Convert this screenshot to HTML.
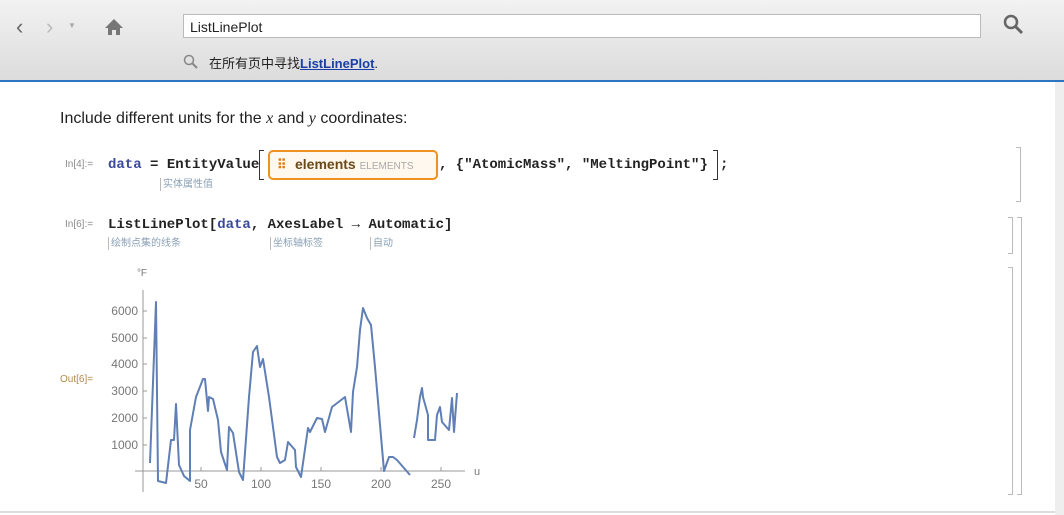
<!DOCTYPE html>
<html><head><meta charset="utf-8"><style>
body{margin:0;width:1064px;height:515px;overflow:hidden;background:#fff;font-family:"Liberation Sans","Noto Sans CJK SC",sans-serif;position:relative}
.tb{position:absolute;left:0;top:0;width:1064px;height:80px;background:linear-gradient(#f2f2f2,#dcdcdc);border-bottom:2px solid #2d75c0}
.abs{position:absolute}
.mono{font-family:"Liberation Mono","DejaVu Sans Mono",monospace;font-weight:bold;font-size:14px;color:#222}
.lbl{font-size:10px;color:#8a8a8a}
.hint{font-size:10px;color:#8aa0b5;border-left:1px solid #bbb;padding-left:2px;height:13px;line-height:13px}
.br{position:absolute;border:1px solid #bbb;border-left:none;width:4px}
</style></head><body>
<div class="tb"></div>
<div class="abs" style="left:16px;top:14px;font-size:22px;color:#666">&#x2039;</div>
<div class="abs" style="left:46px;top:14px;font-size:22px;color:#bbb">&#x203A;</div>
<div class="abs" style="left:68px;top:21px;font-size:8px;color:#aaa">▼</div>
<svg class="abs" style="left:104px;top:18px" width="20" height="18"><path d="M10 1 L1 10 H4 V17 H8 V12 H12 V17 H16 V10 H19 Z" fill="#777"/></svg>
<div class="abs" style="left:183px;top:14px;width:798px;height:24px;background:#fff;border:1px solid #bbb;font-size:14px;line-height:24px;padding-left:6px;box-sizing:border-box;color:#222">ListLinePlot</div>
<svg class="abs" style="left:1003px;top:14px" width="22" height="22"><circle cx="8" cy="8" r="6" stroke="#666" stroke-width="2.5" fill="none"/><path d="M12 12 L19 19" stroke="#666" stroke-width="3"/></svg>
<svg class="abs" style="left:183px;top:54px" width="16" height="16"><circle cx="6" cy="6" r="4.5" stroke="#888" stroke-width="1.5" fill="none"/><path d="M9 9 L14 14" stroke="#888" stroke-width="2"/></svg>
<div class="abs" style="left:209px;top:53px;font-size:13px;color:#222">在所有页中寻找<b style="color:#1a3ea8;text-decoration:underline">ListLinePlot</b>.</div>
<div class="abs" style="left:1055px;top:82px;width:9px;height:433px;background:#eee"></div>
<div class="abs" style="left:0;top:511px;width:1055px;height:2px;background:#ddd"></div>

<div class="abs" style="left:60px;top:110px;font-size:16px;color:#222">Include different units for the <i style="font-family:'Liberation Serif',serif">x</i> and <i style="font-family:'Liberation Serif',serif">y</i> coordinates:</div>

<div class="abs lbl" style="left:65px;top:159px">In[4]:=</div>
<div class="abs mono" style="left:108px;top:157px"><span style="color:#3a4a9a">data</span> = EntityValue</div>
<div class="abs" style="left:259px;top:150px;width:4px;height:28px;border:1px solid #333;border-right:none"></div>
<div class="abs" style="left:268px;top:150px;width:166px;height:26px;border:2px solid #f0901e;border-radius:5px;background:#fff8ee"></div>
<div class="abs" style="left:277px;top:157px;font-size:13px;color:#e07810;font-weight:bold">⠿</div>
<div class="abs" style="left:295px;top:156px;font-size:14px;font-weight:bold;color:#6a4a1a">elements <span style="font-size:10px;font-weight:normal;color:#aaa">ELEMENTS</span></div>
<div class="abs mono" style="left:439px;top:157px">, {"AtomicMass", "MeltingPoint"}</div>
<div class="abs" style="left:713px;top:150px;width:4px;height:28px;border:1px solid #333;border-left:none"></div>
<div class="abs mono" style="left:720px;top:157px">;</div>
<div class="abs hint" style="left:160px;top:178px">实体属性值</div>

<div class="abs lbl" style="left:65px;top:219px">In[6]:=</div>
<div class="abs mono" style="left:108px;top:217px">ListLinePlot[<span style="color:#3a4a9a">data</span>, AxesLabel → Automatic]</div>
<div class="abs hint" style="left:108px;top:237px">绘制点集的线条</div>
<div class="abs hint" style="left:270px;top:237px">坐标轴标签</div>
<div class="abs hint" style="left:370px;top:237px">自动</div>

<div class="br" style="left:1016px;top:147px;height:53px"></div>
<div class="br" style="left:1008px;top:217px;height:35px"></div>
<div class="br" style="left:1017px;top:217px;height:276px"></div>
<div class="br" style="left:1008px;top:267px;height:226px"></div>

<div class="abs lbl" style="left:60px;top:374px;color:#b08a50">Out[6]=</div>
<svg class="abs" style="left:0;top:0" width="1064" height="515">
<g font-family="Liberation Sans,sans-serif" font-size="12" fill="#777" text-anchor="end">
<text x="138" y="315">6000</text><text x="138" y="342">5000</text><text x="138" y="368">4000</text><text x="138" y="395">3000</text><text x="138" y="422">2000</text><text x="138" y="449">1000</text>
</g>
<g font-family="Liberation Sans,sans-serif" font-size="12" fill="#777" text-anchor="middle">
<text x="201" y="488">50</text><text x="261" y="488">100</text><text x="321" y="488">150</text><text x="381" y="488">200</text><text x="441" y="488">250</text>
<text x="142" y="276" font-size="10">°F</text><text x="477" y="475" font-size="11">u</text>
</g>
<g stroke="#999" stroke-width="1">
<path d="M143 290 V492 M135 471 H465"/>
<path d="M143 311 h4 M143 338 h4 M143 364 h4 M143 391 h4 M143 418 h4 M143 445 h4 M201 471 v-4 M261 471 v-4 M321 471 v-4 M381 471 v-4 M441 471 v-4"/>
</g>
<g fill="none" stroke="#5f7fb5" stroke-width="2" stroke-linejoin="round">
<polyline points="150,463 156,302 158,481 166,483 171,440 174,440 176,404 179,465 184,476 190,481 190,430 196,397 203,379 205,379 208,411 209,397 213,399 218,420 221,452 227,470 229,427 233,433 239,472 243,480 249,397 253,352 257,346 260,367 263,359 269,397 273,427 277,457 280,463 285,460 288,442 295,450 296,467 301,477 308,428 310,432 317,418 322,419 325,432 332,407 345,397 351,432 353,392 357,367 360,330 363,308 367,318 371,325 375,367 384,471 389,457 393,457 397,460 410,475"/>
<polyline points="414,438 417,420 420,397 422,388 423,397 428,415 428,440 435,440 437,415 440,407 442,422 449,430 452,398 454,432 457,393"/>
</g>
</svg>
</body></html>
